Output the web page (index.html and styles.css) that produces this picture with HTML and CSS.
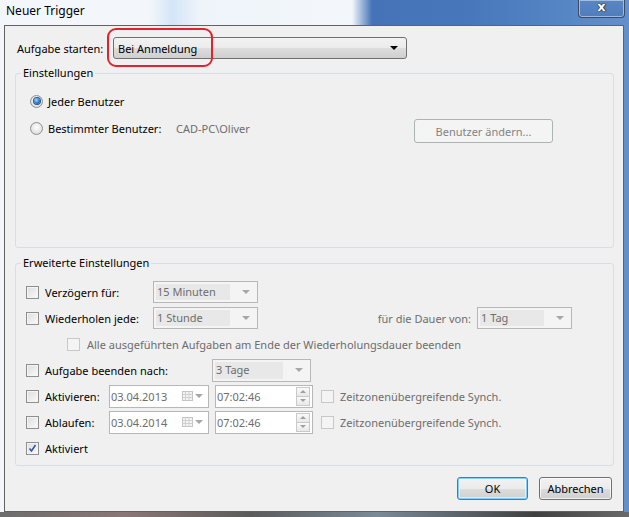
FILE: index.html
```html
<!DOCTYPE html>
<html lang="de">
<head>
  <meta charset="UTF-8" />
  <title>Neuer Trigger</title>
  <link rel="stylesheet" href="styles.css">
</head>
<body>
  <div class="window">
    <div class="titlebar">
      <span class="title">Neuer Trigger</span>
      <div class="close-btn">x</div>
    </div>

    <div class="client">
      <div class="start-row">
        <span class="start-label">Aufgabe starten:</span>
        <div class="combo-main">
          <span>Bei Anmeldung</span>
          <span class="arrow-dark"></span>
        </div>
        <div class="highlight"></div>
      </div>

      <fieldset class="group">
        <legend>Einstellungen</legend>
        <div class="group-body settings-body">
          <div class="radio-row">
            <span class="radio checked"></span>
            <span>Jeder Benutzer</span>
          </div>
          <div class="radio-row second">
            <span class="radio"></span>
            <span class="user-label">Bestimmter Benutzer:</span>
            <span class="user-name">CAD-PC\Oliver</span>
            <button class="btn btn-user" disabled>Benutzer ändern...</button>
          </div>
        </div>
      </fieldset>

      <fieldset class="group group-adv">
        <legend>Erweiterte Einstellungen</legend>
        <div class="group-body adv-body">
          <div class="row">
            <span class="chk"></span>
            <span class="lbl w-108">Verzögern für:</span>
            <div class="combo w-105"><span class="combo-text">15 Minuten</span><span class="arrow-gray"></span></div>
          </div>
          <div class="row">
            <span class="chk"></span>
            <span class="lbl w-108">Wiederholen jede:</span>
            <div class="combo w-105"><span class="combo-text">1 Stunde</span><span class="arrow-gray"></span></div>
            <span class="duration-label">für die Dauer von:</span>
            <div class="combo w-95"><span class="combo-text">1 Tag</span><span class="arrow-gray"></span></div>
          </div>
          <div class="row">
            <span class="chk disabled indent"></span>
            <span class="muted all-label">Alle ausgeführten Aufgaben am Ende der Wiederholungsdauer beenden</span>
          </div>
          <div class="row">
            <span class="chk"></span>
            <span class="lbl w-167">Aufgabe beenden nach:</span>
            <div class="combo w-99 tall"><span class="combo-text">3 Tage</span><span class="arrow-gray"></span></div>
          </div>
          <div class="row">
            <span class="chk"></span>
            <span class="lbl w-64">Aktivieren:</span>
            <div class="date">
              <span class="field-text">03.04.2013</span>
              <svg class="cal" width="11" height="10" viewBox="0 0 11 10"><rect x="0.5" y="0.5" width="10" height="9" fill="#f4f4f4" stroke="#c4c4c4"/><path d="M0.5 3.5H10.5M0.5 6.5H10.5M3.5 0.5V9.5M7 0.5V9.5" stroke="#d0d0d0"/></svg>
              <span class="arrow-gray"></span>
            </div>
            <div class="time">
              <span class="field-text">07:02:46</span>
              <span class="spin"><span class="spin-up"></span><span class="spin-down"></span></span>
            </div>
            <span class="chk disabled sync-chk"></span>
            <span class="muted">Zeitzonenübergreifende Synch.</span>
          </div>
          <div class="row">
            <span class="chk"></span>
            <span class="lbl w-64">Ablaufen:</span>
            <div class="date">
              <span class="field-text">03.04.2014</span>
              <svg class="cal" width="11" height="10" viewBox="0 0 11 10"><rect x="0.5" y="0.5" width="10" height="9" fill="#f4f4f4" stroke="#c4c4c4"/><path d="M0.5 3.5H10.5M0.5 6.5H10.5M3.5 0.5V9.5M7 0.5V9.5" stroke="#d0d0d0"/></svg>
              <span class="arrow-gray"></span>
            </div>
            <div class="time">
              <span class="field-text">07:02:46</span>
              <span class="spin"><span class="spin-up"></span><span class="spin-down"></span></span>
            </div>
            <span class="chk disabled sync-chk"></span>
            <span class="muted">Zeitzonenübergreifende Synch.</span>
          </div>
          <div class="row">
            <span class="chk checked">
              <svg width="11" height="11" viewBox="0 0 11 11"><path d="M2.5 5.5L4.5 8L8.5 2" fill="none" stroke="#3556a8" stroke-width="1.6"/></svg>
            </span>
            <span class="lbl">Aktiviert</span>
          </div>
        </div>
      </fieldset>

      <div class="dialog-buttons">
        <button class="btn btn-ok">OK</button>
        <button class="btn btn-cancel">Abbrechen</button>
      </div>
    </div>

    <div class="bottom-edge"></div>
  </div>
</body>
</html>
```

FILE: styles.css
```css
* {
  box-sizing: border-box;
}

body {
  margin: 0;
  width: 629px;
  height: 517px;
  overflow: hidden;
  font-family: "Noto Sans", sans-serif;
  font-size: 11px;
  color: #000;
  background: linear-gradient(to right, #f3f7fb 0, #f3f7fb 150px, #d4e5f7 172px, #eef4fa 200px, #f3f7fb 352px, #4673b8 372px, #4877bb 470px, #6190cc 629px);
}

.window {
  display: flex;
  flex-direction: column;
  height: 517px;
}

/* title bar */
.titlebar {
  height: 25px;
  display: flex;
  align-items: flex-start;
  padding-left: 6px;
}

.title {
  font-size: 12px;
  line-height: 22px;
}

.close-btn {
  margin-left: auto;
  margin-right: 4px;
  width: 47px;
  height: 18px;
  border: 1px solid #3c4a63;
  border-top: none;
  border-radius: 0 0 4px 4px;
  box-shadow: inset 0 0 0 1px rgba(255,255,255,0.45);
  background: linear-gradient(#5a86c2, #4f7dbd);
  color: #fff;
  font-family: "DejaVu Sans", sans-serif;
  font-weight: bold;
  font-size: 13px;
  line-height: 14px;
  text-align: center;
  text-shadow: 0 0 1px #222, 0 0 1px #222, 1px 0 1px #333;
}

/* dialog area */
.client {
  margin: 0 5px 0 4px;
  height: 487px;
  border: 1px solid #626262;
  background: #f0f0f0;
  padding: 11px 9px 0 10px;
}

.bottom-edge {
  flex: 1;
  background: linear-gradient(to right, #6d6d6d, #8b7676 20%, #5b5b5b 40%, #7a8a98 60%, #3f3f3f 85%, #6a6a6a);
}

.start-row {
  position: relative;
  display: flex;
  align-items: center;
  height: 22px;
  padding-left: 2px;
}

.start-label {
  width: 96px;
}

.combo-main {
  width: 294px;
  height: 22px;
  display: flex;
  align-items: center;
  justify-content: space-between;
  padding: 0 8px 0 4px;
  border: 1px solid #707070;
  border-radius: 3px;
  background: linear-gradient(#f2f2f2 0, #ebebeb 50%, #dddddd 50%, #cfcfcf 100%);
}

.arrow-dark {
  width: 0;
  height: 0;
  border-left: 4px solid transparent;
  border-right: 4px solid transparent;
  border-top: 4px solid #000;
}

.highlight {
  position: absolute;
  left: 92px;
  top: -9px;
  width: 106px;
  height: 39px;
  border: 2px solid #e2232b;
  border-radius: 9px;
}

/* group boxes */
.group {
  margin: 6px 0 0 0;
  padding: 0;
  width: 599px;
  border: 1px solid #d5dfe5;
  border-radius: 3px;
}

.group legend {
  margin-left: 5px;
  padding: 0 2px;
  line-height: 16px;
}

.group-adv {
  margin-top: 7px;
}

.settings-body {
  height: 166px;
  padding: 9px 0 0 14px;
}

.radio-row {
  display: flex;
  align-items: center;
  height: 22px;
}

.radio-row.second {
  margin-top: 7px;
  height: 24px;
  align-items: flex-start;
  line-height: 20px;
}

.radio-row.second .radio {
  margin-top: 3px;
}

.radio {
  width: 13px;
  height: 13px;
  margin-right: 5px;
  border-radius: 50%;
  border: 1px solid #8e8f8f;
  background: radial-gradient(circle at 50% 40%, #ffffff, #e0e0e0 70%, #cfcfcf);
  display: flex;
  align-items: center;
  justify-content: center;
}

.radio.checked::after {
  content: "";
  width: 6px;
  height: 6px;
  border-radius: 50%;
  background: radial-gradient(circle at 40% 35%, #a9dcff, #2f7fd6 50%, #10407e);
  box-shadow: 0 0 0 1px #245791;
}

.user-label {
  width: 128px;
}

.user-name {
  width: 238px;
  color: #6d6d6d;
}

/* buttons */
.btn {
  height: 23px;
  padding: 0;
  font-family: inherit;
  font-size: 11px;
  border: 1px solid #707070;
  border-radius: 3px;
  color: #000;
  background: linear-gradient(#f2f2f2 0, #ebebeb 50%, #dddddd 50%, #cfcfcf 100%);
  box-shadow: inset 0 0 0 1px rgba(255,255,255,0.7);
}

.btn-user {
  width: 139px;
  height: 24px;
  border-color: #adb2b5;
  background: #f4f4f4;
  color: #838383;
  box-shadow: none;
}

.btn-ok {
  width: 71px;
  border-color: #3c7fb1;
  box-shadow: inset 0 0 0 1px #7fd0f8, inset 0 0 0 2px rgba(255,255,255,0.5);
}

.btn-cancel {
  width: 73px;
}

.dialog-buttons {
  display: flex;
  justify-content: flex-end;
  gap: 11px;
  margin: 11px 2px 0 0;
}

/* advanced settings */
.adv-body {
  padding: 10px 0 6px 10px;
  display: flex;
  flex-direction: column;
  gap: 4px;
}

.row {
  display: flex;
  align-items: center;
  height: 22px;
}

.chk {
  width: 13px;
  height: 13px;
  flex: none;
  margin-right: 6px;
  border: 1px solid #8e8f8f;
  background: linear-gradient(135deg, #dcdcdc, #fbfbfb);
  box-shadow: inset 0 0 0 1px #f4f4f4;
  display: flex;
  align-items: center;
  justify-content: center;
}

.chk svg {
  display: block;
}

.chk.disabled {
  border-color: #c8c8c8;
  background: #f4f4f4;
  box-shadow: none;
}

.chk.indent {
  margin-left: 41px;
  margin-right: 7px;
}

.sync-chk {
  margin-left: 8px;
}

.muted {
  color: #6d6d6d;
}

.lbl {
  flex: none;
}

.w-108 { width: 108px; }
.w-167 { width: 167px; }
.w-64 { width: 64px; }

.combo {
  height: 22px;
  display: flex;
  align-items: center;
  padding: 2px;
  border: 1px solid #b7b7b7;
  background: #f4f4f4;
  color: #6d6d6d;
}

.combo.tall {
  height: 23px;
}

.combo-text {
  flex: 1;
  height: 100%;
  line-height: 16px;
  padding-left: 1px;
  margin-right: 12px;
  background: #e8e8e8;
}

.w-105 { width: 105px; }
.w-95 { width: 95px; }
.w-99 { width: 99px; }

.arrow-gray {
  width: 0;
  height: 0;
  margin-right: 5px;
  border-left: 4px solid transparent;
  border-right: 4px solid transparent;
  border-top: 4px solid #a7a7a7;
}

.duration-label {
  width: 219px;
  padding-right: 6px;
  text-align: right;
  color: #6d6d6d;
}

.date,
.time {
  height: 23px;
  display: flex;
  align-items: center;
  border: 1px solid #b7b7b7;
  background: #fff;
  color: #6d6d6d;
  padding-left: 1px;
}

.date {
  width: 100px;
}

.time {
  width: 98px;
  margin-left: 6px;
}

.field-text {
  flex: 1;
}

.cal {
  margin-right: 2px;
}

.spin {
  width: 14px;
  height: 19px;
  margin-right: 2px;
  display: flex;
  flex-direction: column;
}

.spin-up,
.spin-down {
  flex: 1;
  border: 1px solid #c9c9c9;
  background: linear-gradient(#fafafa, #e8e8e8);
  display: flex;
  align-items: center;
  justify-content: center;
}

.spin-down {
  border-top: none;
}

.spin-up::after,
.spin-down::after {
  content: "";
  border-left: 3px solid transparent;
  border-right: 3px solid transparent;
}

.spin-up::after {
  border-bottom: 3px solid #a0a0a0;
}

.spin-down::after {
  border-top: 3px solid #a0a0a0;
}
```
